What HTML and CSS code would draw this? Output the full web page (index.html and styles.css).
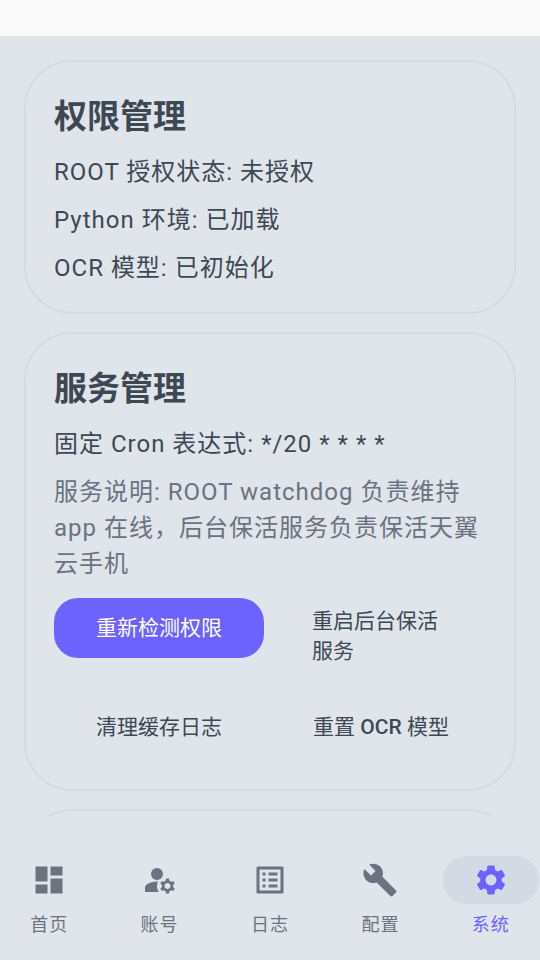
FILE: index.html
```html
<!DOCTYPE html>
<html lang="zh-CN">
<head>
<meta charset="utf-8">
<meta name="viewport" content="width=device-width, initial-scale=1">
<title>系统</title>
<link rel="stylesheet" href="styles.css">
</head>
<body>
<div class="status-bar"></div>
<main class="content">
  <section class="card">
    <h2 class="card-title">权限管理</h2>
    <p class="text">ROOT 授权状态: 未授权</p>
    <p class="text">Python 环境: 已加载</p>
    <p class="text">OCR 模型: 已初始化</p>
  </section>
  <section class="card">
    <h2 class="card-title">服务管理</h2>
    <p class="text">固定 Cron 表达式: */20 * * * *</p>
    <p class="text muted">服务说明: ROOT watchdog 负责维持 app 在线，后台保活服务负责保活天翼云手机</p>
    <div class="actions">
      <button class="btn btn-primary" type="button"><span>重新检测权限</span></button>
      <button class="btn" type="button"><span>重启后台保活服务</span></button>
      <button class="btn" type="button"><span>清理缓存日志</span></button>
      <button class="btn" type="button"><span>重置 <span class="latin">OCR</span> 模型</span></button>
    </div>
  </section>
  <section class="card card-next"></section>
</main>
<nav class="nav">
  <a class="nav-item" href="#home">
    <span class="nav-icon"><svg viewBox="0 0 24 24" aria-hidden="true"><path d="M3 13h8V3H3v10zm0 8h8v-6H3v6zm10 0h8V11h-8v10zm0-18v6h8V3h-8z"/></svg></span>
    <span class="nav-label">首页</span>
  </a>
  <a class="nav-item" href="#account">
    <span class="nav-icon"><svg viewBox="0 0 24 24" aria-hidden="true"><circle cx="10" cy="8" r="4"/><path d="M10.67 13.02C10.45 13.01 10.23 13 10 13c-2.42 0-4.68.67-6.61 1.82C2.51 15.34 2 16.32 2 17.35V20h9.26c-.79-1.13-1.26-2.51-1.26-4 0-1.07.25-2.07.67-2.98z"/><path d="M20.75 16c0-.22-.03-.42-.06-.63l1.14-1.01-1-1.73-1.45.49c-.32-.27-.68-.48-1.08-.63L18 11h-2l-.3 1.49c-.4.15-.76.36-1.08.63l-1.45-.49-1 1.73 1.14 1.01c-.03.21-.06.41-.06.63s.03.42.06.63l-1.14 1.01 1 1.73 1.45-.49c.32.27.68.48 1.08.63L16 21h2l.3-1.49c.4-.15.76-.36 1.08-.63l1.45.49 1-1.73-1.14-1.01c.03-.21.06-.41.06-.63zM17 18c-1.1 0-2-.9-2-2s.9-2 2-2 2 .9 2 2-.9 2-2 2z"/></svg></span>
    <span class="nav-label">账号</span>
  </a>
  <a class="nav-item" href="#logs">
    <span class="nav-icon"><svg viewBox="0 0 24 24" aria-hidden="true"><path d="M19 5v14H5V5h14m1.1-2H3.9c-.5 0-.9.4-.9.9v16.2c0 .4.4.9.9.9h16.2c.4 0 .9-.5.9-.9V3.9c0-.5-.5-.9-.9-.9zM11 7h6v2h-6V7zm0 4h6v2h-6v-2zm0 4h6v2h-6zM7 7h2v2H7zm0 4h2v2H7zm0 4h2v2H7z"/></svg></span>
    <span class="nav-label">日志</span>
  </a>
  <a class="nav-item" href="#config">
    <span class="nav-icon"><svg viewBox="0 0 24 24" aria-hidden="true"><path d="M22.7 19l-9.1-9.1c.9-2.3.4-5-1.5-6.9-2-2-5-2.4-7.4-1.3L9 6 6 9 1.6 4.7C.4 7.1.9 10.1 2.9 12.1c1.9 1.9 4.6 2.4 6.9 1.5l9.1 9.1c.4.4 1 .4 1.4 0l2.3-2.3c.5-.4.5-1.1.1-1.4z"/></svg></span>
    <span class="nav-label">配置</span>
  </a>
  <a class="nav-item active" href="#system" aria-current="page">
    <span class="nav-icon"><svg viewBox="0 0 24 24" aria-hidden="true"><path d="M19.14 12.94c.04-.3.06-.61.06-.94 0-.32-.02-.64-.07-.94l2.03-1.58c.18-.14.23-.41.12-.61l-1.92-3.32c-.12-.22-.37-.29-.59-.22l-2.39.96c-.5-.38-1.03-.7-1.62-.94l-.36-2.54c-.04-.24-.24-.41-.48-.41h-3.84c-.24 0-.43.17-.47.41l-.36 2.54c-.59.24-1.13.57-1.62.94l-2.39-.96c-.22-.08-.47 0-.59.22L2.74 8.87c-.12.21-.08.47.12.61l2.03 1.58c-.05.3-.09.63-.09.94s.02.64.07.94l-2.03 1.58c-.18.14-.23.41-.12.61l1.92 3.32c.12.22.37.29.59.22l2.39-.96c.5.38 1.03.7 1.62.94l.36 2.54c.05.24.24.41.48.41h3.84c.24 0 .44-.17.47-.41l.36-2.54c.59-.24 1.13-.56 1.62-.94l2.39.96c.22.08.47 0 .59-.22l1.92-3.32c.12-.22.07-.47-.12-.61l-2.01-1.58zM12 15.6c-1.98 0-3.6-1.62-3.6-3.6s1.62-3.6 3.6-3.6 3.6 1.62 3.6 3.6-1.62 3.6-3.6 3.6z"/></svg></span>
    <span class="nav-label">系统</span>
  </a>
</nav>
</body>
</html>
```
FILE: styles.css
```css
* {
  box-sizing: border-box;
}

body {
  margin: 0;
  height: 100vh;
  display: flex;
  flex-direction: column;
  background: #e0e5ec;
  color: #3d4852;
  font-family: Roboto, "Noto Sans CJK SC", sans-serif;
}

.status-bar {
  flex: none;
  height: 36px;
  background: #fafafa;
}

.content {
  flex: 1;
  min-height: 0;
  overflow: hidden;
  display: flex;
  flex-direction: column;
  gap: 18px;
  padding: 24px 24px 0;
}

.card {
  flex: none;
  display: flex;
  flex-direction: column;
  gap: 12px;
  padding: 30px 28px 26px;
  border: 2px solid #d5dae4;
  border-radius: 48px;
}

.card-next {
  min-height: 240px;
}

.card-title {
  margin: 0;
  font-size: 33px;
  line-height: 50px;
  font-weight: 700;
}

.text {
  margin: 0;
  font-size: 24px;
  line-height: 36px;
  letter-spacing: 1px;
}

.muted {
  color: #6b7280;
}

.actions {
  display: grid;
  grid-template-columns: 1fr 1fr;
  align-items: start;
  gap: 23px 12px;
  padding: 4px 0 6px;
}

.btn {
  display: flex;
  align-items: center;
  justify-content: center;
  min-height: 60px;
  padding: 8px 36px;
  border: 0;
  border-radius: 24px;
  background: transparent;
  color: inherit;
  font-family: inherit;
  font-size: 21px;
  line-height: 30px;
  font-weight: 400;
  text-align: left;
}

.btn-primary {
  background: #6c63ff;
  color: #fff;
}

.latin {
  font-weight: 500;
}

.nav {
  flex: none;
  display: grid;
  grid-template-columns: repeat(5, 1fr);
  gap: 12px;
  padding: 40px 0 22px;
}

.nav-item {
  display: flex;
  flex-direction: column;
  align-items: center;
  gap: 8px;
  color: #6b7280;
  text-decoration: none;
}

.nav-icon {
  display: flex;
  align-items: center;
  justify-content: center;
  width: 96px;
  height: 48px;
  border-radius: 24px;
}

.nav-icon svg {
  width: 36px;
  height: 36px;
  fill: currentColor;
}

.nav-label {
  font-size: 18px;
  line-height: 26px;
  letter-spacing: 1px;
}

.active {
  color: #6c63ff;
}

.active .nav-icon {
  background: #d3dae3;
}
```
